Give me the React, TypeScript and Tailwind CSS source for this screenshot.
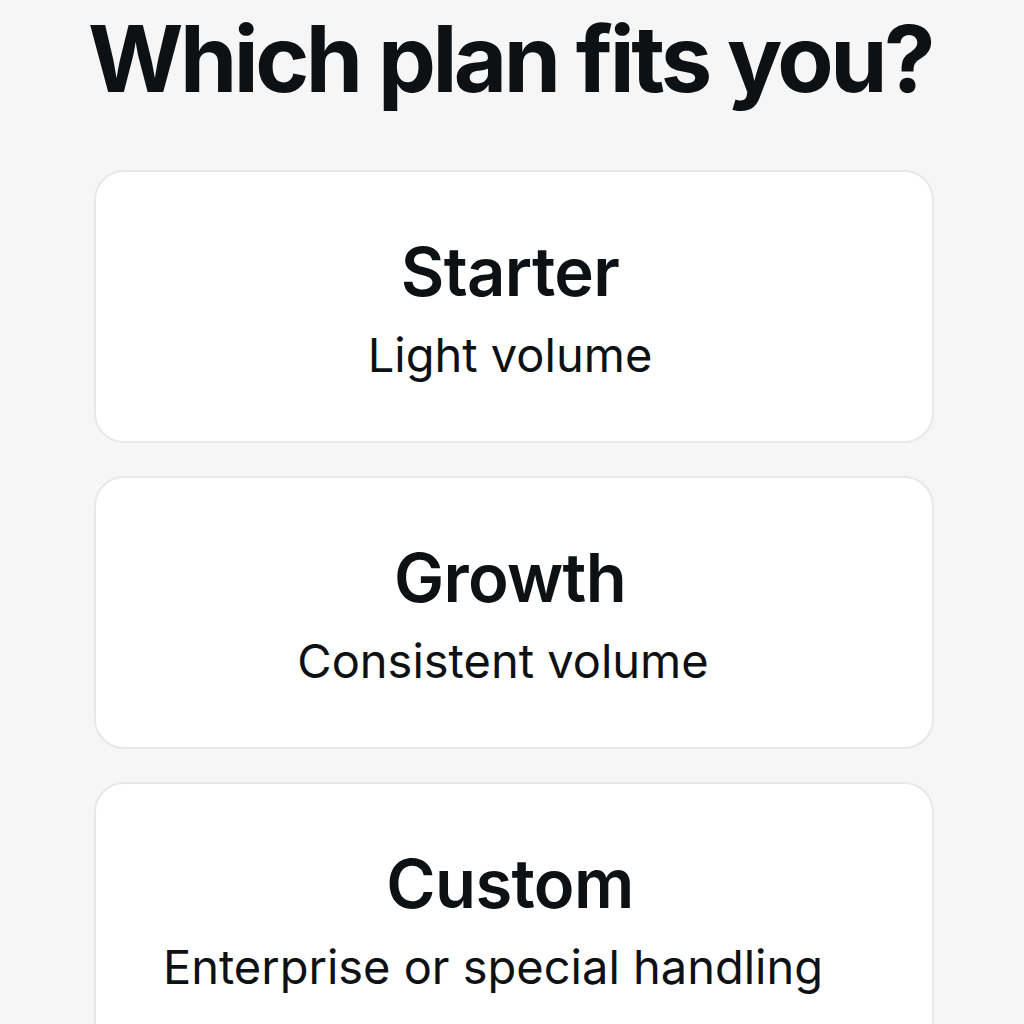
const plans = [
  { name: 'Starter', blurb: 'Light volume', blurbShift: 'pr-[8px]' },
  { name: 'Growth', blurb: 'Consistent volume', blurbShift: 'pr-[22px]' },
  { name: 'Custom', blurb: 'Enterprise or special handling', blurbShift: 'pr-[42px]' },
];

export default function App() {
  return (
    <div
      className="h-[1024px] overflow-hidden bg-[#f6f6f6] pt-[9px] text-[#0e1114]"
      style={{ fontFamily: 'Inter, "Liberation Sans", sans-serif' }}
    >
      <h1 className="pr-[4px] text-center text-[92px] font-bold leading-[100px] tracking-[-0.038em]">
        Which plan fits you?
      </h1>
      <div className="ml-[94px] mt-[61px] flex w-[840px] flex-col gap-[33px]">
        {plans.map((plan) => (
          <div
            key={plan.name}
            className="flex h-[273px] shrink-0 flex-col items-stretch rounded-[30px] border-2 border-[#e8e8e8] bg-white pt-[64px] text-center"
          >
            <h2 className="pr-[8px] text-[67px] font-semibold leading-[72px] tracking-[-0.01em]">{plan.name}</h2>
            <p className={`mt-[19px] text-[47px] leading-[56px] ${plan.blurbShift}`}>{plan.blurb}</p>
          </div>
        ))}
      </div>
    </div>
  );
}
